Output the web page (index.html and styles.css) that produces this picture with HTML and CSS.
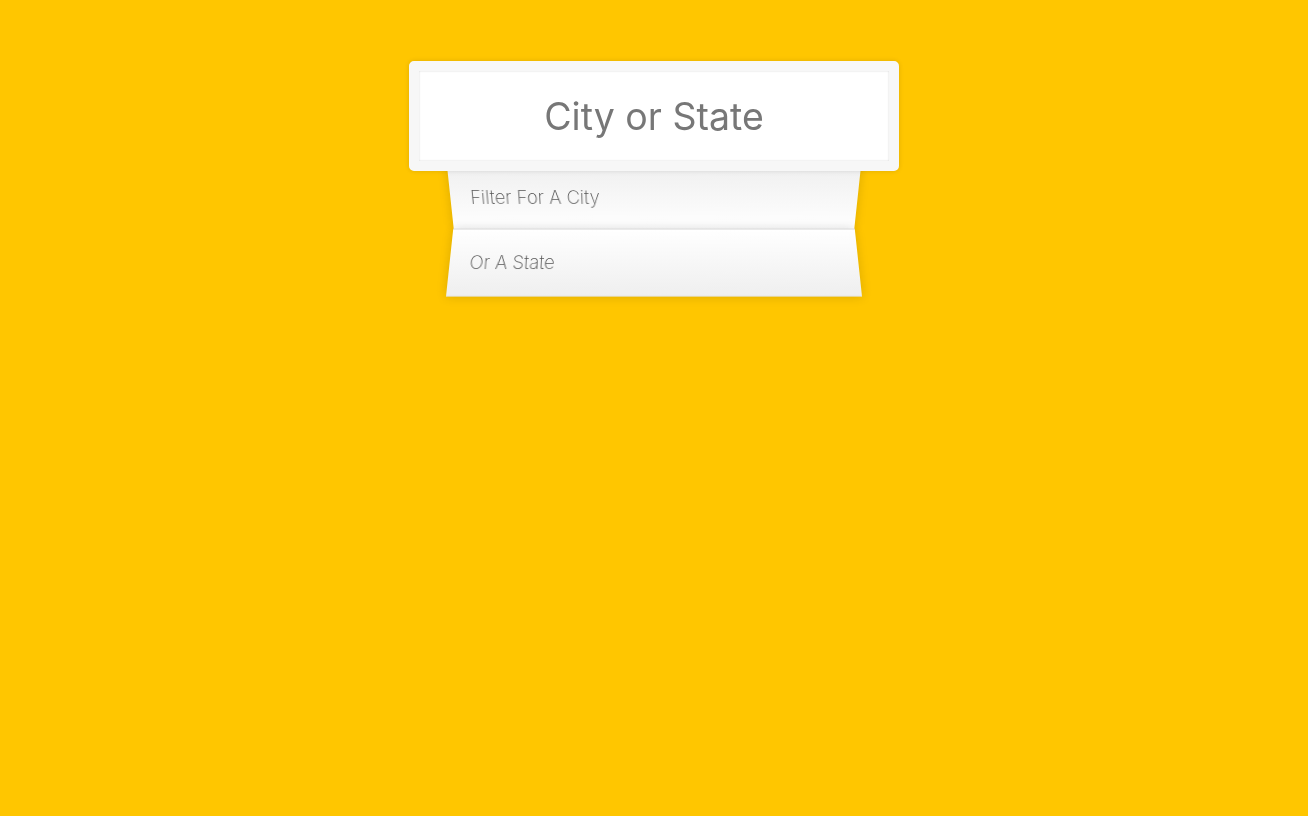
FILE: index.html
```html
<!DOCTYPE html>
<html lang="en">
<head>
<meta charset="UTF-8">
<title>Type Ahead</title>
<link rel="stylesheet" href="styles.css">
</head>
<body>
<form class="search-form">
  <input type="text" class="search" placeholder="City or State">
  <ul class="suggestions">
    <li class="item item-odd"><span class="label">Filter for a city</span></li>
    <li class="item item-even"><span class="label">or a state</span></li>
  </ul>
</form>
</body>
</html>
```
FILE: styles.css
```css
html {
  box-sizing: border-box;
  background: #ffc600;
  font-family: Inter, "Liberation Sans", sans-serif;
  font-size: 20px;
  font-weight: 300;
}
*, *:before, *:after {
  box-sizing: inherit;
}
body {
  margin: 0;
  padding-top: 1px;
}
.search-form {
  width: 408px;
  margin: 60px auto;
}
.search {
  display: block;
  position: relative;
  z-index: 2;
  width: 120%;
  margin: 0 0 -10px -10%;
  padding: 20px;
  height: 110px;
  line-height: 50px;
  text-align: center;
  outline: 0;
  border: 10px solid #f7f7f7;
  border-radius: 5px;
  background: #fff;
  font-family: Inter, "Liberation Sans", sans-serif;
  font-size: 37.5px;
  font-weight: 400;
  color: #555;
  box-shadow: 0 0 5px rgba(0,0,0,0.12), inset 0 0 2px rgba(0,0,0,0.19);
}
.search::placeholder {
  color: #777;
  opacity: 1;
}
.suggestions {
  margin: 0;
  padding: 0;
  position: relative;
}
.item {
  list-style: none;
  box-shadow: 0 0 10px rgba(0,0,0,0.14);
  margin: 0;
  padding: 22px 20px 21px;
  line-height: 23px;
  display: flex;
  justify-content: space-between;
  text-transform: capitalize;
  color: #555;
  font-size: 18.5px;
  font-weight: 250;
}
.item-odd {
  transform: perspective(100px) rotateX(-3deg) translateY(3px);
  background: linear-gradient(to top, #ffffff 0%, #efefef 100%);
}
.item-even {
  border-top: 1px solid #d8d8d8;
  border-bottom: 1px solid #e4e4e4;
  transform: perspective(100px) rotateX(3deg) translateY(1px) scale(1.001);
  background: linear-gradient(to bottom, #ffffff 0%, #efefef 100%);
}
```
